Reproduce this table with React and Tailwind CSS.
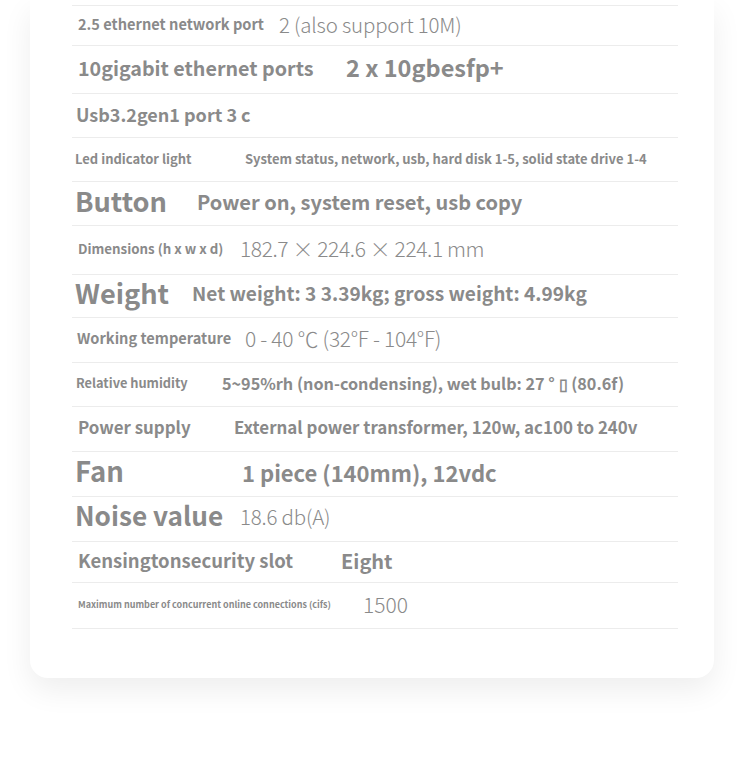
import React from "react";

const rows = [
  { h: 40, lpl: 78, vx: 279, label: "2.5 ethernet network port", lc: "text-[14.6px] font-semibold", value: "2 (also support 10M)", vc: "text-[20.5px] font-light tracking-[-0.2px]" },
  { h: 48, lpl: 78, vx: 346, label: "10gigabit ethernet ports", lc: "text-[19.7px] font-semibold", value: "2 x 10gbesfp+", vc: "text-[23.5px] font-bold" },
  { h: 44, lpl: 76, vx: 300, label: "Usb3.2gen1 port 3 c", lc: "text-[18px] font-semibold", value: "", vc: "" },
  { h: 44, lpl: 75, vx: 245, label: "Led indicator light", lc: "text-[13px] font-semibold", value: "System status, network, usb, hard disk 1-5, solid state drive 1-4", vc: "text-[13px] font-semibold" },
  { h: 44, lpl: 75, vx: 197, label: "Button", lc: "text-[27.2px] font-bold pb-[3px]", value: "Power on, system reset, usb copy", vc: "text-[20px] font-semibold" },
  { h: 49, lpl: 78, vx: 240, label: "Dimensions (h x w x d)", lc: "text-[13.3px] font-semibold", value: "182.7 × 224.6 × 224.1 mm", vc: "text-[21px] font-light tracking-[-0.4px]" },
  { h: 43, lpl: 75, vx: 192, label: "Weight", lc: "text-[27.2px] font-bold pb-[4px]", value: "Net weight: 3 3.39kg; gross weight: 4.99kg", vc: "text-[19.1px] font-bold pb-[2px]" },
  { h: 45, lpl: 77, vx: 245, label: "Working temperature", lc: "text-[14.6px] font-semibold", value: "0 - 40 ℃ (32°F - 104°F)", vc: "text-[21px] font-light tracking-[-0.3px]" },
  { h: 44, lpl: 76, vx: 222, label: "Relative humidity", lc: "text-[12.8px] font-semibold", value: "5~95%rh (non-condensing), wet bulb: 27 ° \u25AF (80.6f)", vc: "text-[16.2px] font-semibold" },
  { h: 45, lpl: 78, vx: 234, label: "Power supply", lc: "text-[16.9px] font-semibold", value: "External power transformer, 120w, ac100 to 240v", vc: "text-[16.9px] font-semibold" },
  { h: 45, lpl: 75, vx: 242, label: "Fan", lc: "text-[27.5px] font-bold pb-[4px]", value: "1 piece (140mm), 12vdc", vc: "text-[22px] font-semibold pb-[2px]" },
  { h: 45, lpl: 75, vx: 240, label: "Noise value", lc: "text-[26.2px] font-bold pb-[5px]", value: "18.6 db(A)", vc: "text-[20.5px] font-light tracking-[-0.2px] pb-[3px]" },
  { h: 41, lpl: 78, vx: 341, label: "Kensingtonsecurity slot", lc: "text-[18.5px] font-semibold", value: "Eight", vc: "text-[20px] font-bold" },
  { h: 46, lpl: 78, vx: 363, label: "Maximum number of concurrent online connections (cifs)", lc: "text-[9px] font-semibold", value: "1500", vc: "text-[21px] font-light" },
];

export default function App() {
  return (
    <div
      className="w-[750px] h-[771px] bg-white overflow-hidden"
      style={{ fontFamily: '"Noto Sans CJK SC", "Noto Sans", sans-serif' }}
    >
      <div className="mx-[30px] w-[684px] h-[678px] bg-white rounded-b-[18px] shadow-[0_12px_30px_rgba(0,0,0,0.07)] pl-[42px] pr-[36px] pt-[5px]">
        <div className="border-t border-[#ececec]">
          {rows.map((r, i) => (
            <div
              key={i}
              className="flex items-center border-b border-[#ececec] text-[#8a8a8a] whitespace-nowrap pb-[3px]"
              style={{ height: r.h }}
            >
              <div
                className={"shrink-0 leading-none " + r.lc}
                style={{ paddingLeft: r.lpl - 72, width: r.vx - 72 }}
              >
                {r.label}
              </div>
              <div className={"leading-none " + r.vc}>{r.value}</div>
            </div>
          ))}
        </div>
      </div>
    </div>
  );
}
